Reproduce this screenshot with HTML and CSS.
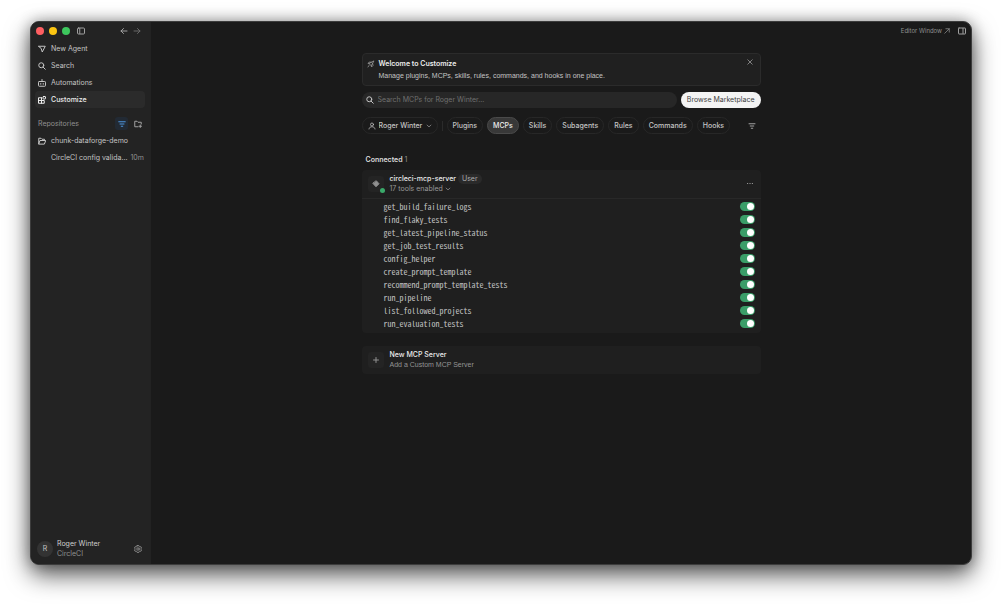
FILE: index.html
```html
<!DOCTYPE html>
<html lang="en">
<head>
    <meta charset="UTF-8">
    <meta name="viewport" content="width=device-width, initial-scale=1.0">
    <title>Customize</title>
    <link rel="stylesheet" href="styles.css">
</head>
<body>
    <div class="window">
        <aside class="sidebar">
            <div class="titlebar">
                <span class="dot red"></span>
                <span class="dot yellow"></span>
                <span class="dot green"></span>
                <button class="icon-btn panel-btn" aria-label="Toggle sidebar">
                    <svg class="icon" viewBox="0 0 16 16"><rect x="1" y="2" width="14" height="12" rx="2"/><path d="M5.500 3v10"/></svg>
                </button>
                <button class="icon-btn back-btn" aria-label="Back">
                    <svg class="icon" viewBox="0 0 16 16"><path d="M14 8H2M7 3L2 8l5 5"/></svg>
                </button>
                <button class="icon-btn faded" aria-label="Forward">
                    <svg class="icon" viewBox="0 0 16 16"><path d="M2 8h12M9 3l5 5-5 5"/></svg>
                </button>
            </div>

            <nav class="nav">
                <a class="nav-item" href="#">
                    <svg class="icon" viewBox="0 0 16 16"><path d="M1.500 2.500h13L8.500 14 6.500 7.500z"/></svg>
                    New Agent
                </a>
                <a class="nav-item" href="#">
                    <svg class="icon" viewBox="0 0 16 16"><circle cx="6.500" cy="6.500" r="5"/><path d="M10.300 10.300L14.500 14.500"/></svg>
                    Search
                </a>
                <a class="nav-item" href="#">
                    <svg class="icon" viewBox="0 0 16 16"><rect x="1" y="5" width="14" height="9.500" rx="1.500"/><path d="M8 1v4M5.500 9v1.500M10.500 9v1.500"/></svg>
                    Automations
                </a>
                <a class="nav-item active" href="#">
                    <svg class="icon" viewBox="0 0 16 16"><path d="M7 3.500H1v11h11.500V9H1M7 3.500v11"/><rect x="10" y="1" width="5" height="5" rx="1"/></svg>
                    Customize
                </a>
            </nav>

            <div class="repos-head">
                <span>Repositories</span>
                <button class="icon-btn filter-on" aria-label="Filter repositories">
                    <svg class="icon" viewBox="0 0 16 16"><path d="M1.500 3.500h13M4 8h8M6.500 12.500h3"/></svg>
                </button>
                <button class="icon-btn" aria-label="Add repository">
                    <svg class="icon" viewBox="0 0 16 16"><path d="M8 13.500H1.500v-11h4.500l2 2h6.500V8M12.500 10v5M10 12.500h5"/></svg>
                </button>
            </div>
            <a class="nav-item" href="#">
                <svg class="icon" viewBox="0 0 16 16"><path d="M1.500 13.500v-11h4.500l2 2h5V7M1.500 13.500L4 7h11.500L13 13.500z"/></svg>
                chunk-dataforge-demo
            </a>
            <a class="nav-item thread" href="#">
                <span class="thread-name">CircleCI config valida...</span>
                <span class="thread-age">10m</span>
            </a>

            <div class="account">
                <span class="avatar">R</span>
                <div class="account-text">
                    <div class="account-name">Roger Winter</div>
                    <div class="account-team">CircleCI</div>
                </div>
                <button class="icon-btn" aria-label="Settings">
                    <svg class="icon thin" viewBox="0 0 16 16"><path d="M6.500 1h3l.6 2 1.600.9 2-.5 1.500 2.600L13.800 7.500v1l1.400 1.500-1.500 2.600-2-.5-1.600.9-.6 2h-3l-.6-2-1.600-.9-2 .5L.8 10l1.400-1.500v-1L.8 6l1.500-2.600 2 .5L5.900 3z"/><circle cx="8" cy="8" r="2.500"/></svg>
                </button>
            </div>
        </aside>

        <main class="main">
            <header class="topbar">
                <a class="editor-link" href="#">
                    Editor Window
                    <svg class="icon small" viewBox="0 0 16 16"><path d="M2 14L14 2M5 2h9v9"/></svg>
                </a>
                <button class="icon-btn" aria-label="Toggle panel">
                    <svg class="icon" viewBox="0 0 16 16"><rect x="1" y="2" width="14" height="12" rx="1"/><path d="M10 3v10"/></svg>
                </button>
            </header>

            <div class="content">
                <section class="banner">
                    <svg class="icon thin" viewBox="0 0 16 16"><path d="M13.500 2.500L8.500 11.500 4.500 7.500zM4.500 7.500L2 7l2.500-3 4 .5M8.500 11.500l.5 2.500 3-3-.5-3.500M4 11l-2 3"/></svg>
                    <div class="banner-text">
                        <h1 class="title">Welcome to Customize</h1>
                        <p class="small-text">Manage plugins, MCPs, skills, rules, commands, and hooks in one place.</p>
                    </div>
                    <button class="icon-btn" aria-label="Close">
                        <svg class="icon small" viewBox="0 0 16 16"><path d="M2 2l12 12M14 2L2 14"/></svg>
                    </button>
                </section>

                <div class="search-row">
                    <label class="search">
                        <svg class="icon" viewBox="0 0 16 16"><circle cx="6.500" cy="6.500" r="5"/><path d="M10.300 10.300L14.500 14.500"/></svg>
                        <input type="text" aria-label="Search MCPs" placeholder="Search MCPs for Roger Winter...">
                    </label>
                    <button class="browse">Browse Marketplace</button>
                </div>

                <div class="filters">
                    <label class="pill owner">
                        <svg class="icon thin" viewBox="0 0 16 16"><circle cx="8" cy="5" r="3"/><path d="M2 14c.5-3 2.500-4.500 6-4.500s5.500 1.500 6 4.500"/></svg>
                        <select aria-label="Owner">
                            <option>Roger Winter</option>
                        </select>
                        <svg class="icon small thin" viewBox="0 0 16 16"><path d="M3 5.500l5 5 5-5"/></svg>
                    </label>
                    <span class="divider"></span>
                    <button class="pill">Plugins</button>
                    <button class="pill selected">MCPs</button>
                    <button class="pill">Skills</button>
                    <button class="pill">Subagents</button>
                    <button class="pill">Rules</button>
                    <button class="pill">Commands</button>
                    <button class="pill">Hooks</button>
                    <button class="icon-btn filter-btn" aria-label="Filter">
                        <svg class="icon" viewBox="0 0 16 16"><path d="M2 3.500h12M4.500 8h7M6.500 12.500h3"/></svg>
                    </button>
                </div>

                <h2 class="section-title">Connected <span class="count">1</span></h2>

                <section class="card">
                    <div class="card-head">
                        <span class="server-icon">
                            <svg class="icon" viewBox="0 0 16 16"><path d="M9 2l5 5.500L8 13.500 2 7z" fill="currentColor"/></svg>
                            <span class="status"></span>
                        </span>
                        <div class="server-text">
                            <div class="server-name">circleci-mcp-server <span class="tag">User</span></div>
                            <button class="tools-toggle" aria-expanded="true">
                                17 tools enabled
                                <svg class="icon small" viewBox="0 0 16 16"><path d="M3 5.500l5 5 5-5"/></svg>
                            </button>
                        </div>
                        <button class="icon-btn" aria-label="More">
                            <svg class="icon" viewBox="0 0 16 16"><path d="M3 7h.5M7.800 7h.5M12.500 7h.5"/></svg>
                        </button>
                    </div>
                    <div class="tools">
                        <label class="tool">get_build_failure_logs <input type="checkbox" class="switch" checked></label>
                        <label class="tool">find_flaky_tests <input type="checkbox" class="switch" checked></label>
                        <label class="tool">get_latest_pipeline_status <input type="checkbox" class="switch" checked></label>
                        <label class="tool">get_job_test_results <input type="checkbox" class="switch" checked></label>
                        <label class="tool">config_helper <input type="checkbox" class="switch" checked></label>
                        <label class="tool">create_prompt_template <input type="checkbox" class="switch" checked></label>
                        <label class="tool">recommend_prompt_template_tests <input type="checkbox" class="switch" checked></label>
                        <label class="tool">run_pipeline <input type="checkbox" class="switch" checked></label>
                        <label class="tool">list_followed_projects <input type="checkbox" class="switch" checked></label>
                        <label class="tool">run_evaluation_tests <input type="checkbox" class="switch" checked></label>
                    </div>
                </section>

                <button class="card new-server">
                    <span class="server-icon">
                        <svg class="icon" viewBox="0 0 16 16"><path d="M8 3v10M3 8h10"/></svg>
                    </span>
                    <span class="server-text">
                        <span class="server-name">New MCP Server</span>
                        <span class="small-text muted">Add a Custom MCP Server</span>
                    </span>
                </button>
            </div>
        </main>
    </div>
</body>
</html>
```

FILE: styles.css
```css
* {
    box-sizing: border-box;
}

body {
    display: flex;
    height: 100vh;
    margin: 0;
    padding: 21px 31px 40px 30px;
    background-color: #fff;
    color: #c4c4c4;
    font-family: Inter, "Liberation Sans", sans-serif;
    font-size: 7px;
    line-height: 10px;
}

h1, h2, p {
    margin: 0;
}

a {
    color: inherit;
    text-decoration: none;
}

button, input, select {
    margin: 0;
    padding: 0;
    border: none;
    background: none;
    color: inherit;
    font: inherit;
}

.window {
    display: flex;
    flex: 1;
    overflow: hidden;
    border: 1px solid #3c3c3c;
    border-radius: 9px;
    background-color: #1a1a1a;
    box-shadow: 0 10px 24px rgba(0,0,0,0.65), 0 0 14px rgba(0,0,0,0.3);
}

.icon {
    display: block;
    flex: none;
    width: 8px;
    height: 8px;
    fill: none;
    stroke: currentColor;
    stroke-width: 2;
    stroke-linejoin: round;
    stroke-linecap: round;
}

.icon.small {
    width: 6px;
    height: 6px;
}

.icon.thin {
    stroke-width: 1.5;
}

.icon-btn {
    display: flex;
    flex: none;
    align-items: center;
    justify-content: center;
    color: #a0a0a0;
}

.faded {
    color: #686868;
}

/* Sidebar */
.sidebar {
    display: flex;
    flex: none;
    flex-direction: column;
    width: 120px;
    padding: 0 5px 0 4px;
    border-right: 1px solid #222;
    background-color: #232323;
}

.titlebar {
    display: flex;
    align-items: center;
    gap: 5px;
    height: 17px;
    margin-bottom: 1px;
    padding: 0 4px 0 1px;
}

.dot {
    width: 8px;
    height: 8px;
    border-radius: 50%;
}

.red {
    background-color: #ff5f62;
}

.yellow {
    background-color: #fbc512;
}

.green {
    background-color: #3dc75d;
}

.panel-btn {
    margin-left: 2px;
}

.back-btn {
    margin-left: auto;
}

.nav {
    margin-bottom: 7px;
}

.nav-item {
    display: flex;
    align-items: center;
    gap: 5px;
    height: 17px;
    padding: 0 3px;
    border-radius: 4px;
}

.nav-item.active {
    background-color: #2b2b2b;
    color: #ececec;
    font-weight: 500;
}

.repos-head {
    display: flex;
    align-items: center;
    gap: 6px;
    height: 17px;
    padding: 0 3px;
    color: #909090;
}

.filter-on {
    width: 13px;
    height: 13px;
    margin-left: auto;
    border-radius: 3px;
    background-color: #222a34;
    color: #4c94dc;
}

.nav-item.thread {
    gap: 3px;
    padding: 0 2px 0 16px;
}

.thread-name {
    white-space: nowrap;
}

.thread-age {
    margin-left: auto;
    color: #929292;
}

.account {
    display: flex;
    align-items: center;
    gap: 4px;
    margin-top: auto;
    padding: 0 3px 5px 2px;
}

.avatar {
    width: 16px;
    height: 16px;
    border-radius: 50%;
    background-color: #333;
    line-height: 16px;
    text-align: center;
}

.account-text {
    flex: 1;
}

.account-name {
    color: #d0d0d0;
}

.account-team {
    color: #909090;
}

/* Main area */
.main {
    flex: 1;
    min-width: 0;
}

.topbar {
    display: flex;
    align-items: center;
    justify-content: flex-end;
    gap: 8px;
    height: 17px;
    padding-right: 5px;
}

.editor-link {
    display: flex;
    align-items: center;
    gap: 2px;
    color: #909090;
    font-size: 6px;
}

.content {
    max-width: 399px;
    margin: 14px auto 0;
}

.banner {
    display: flex;
    gap: 4px;
    padding: 5px 7px 4px 4px;
    border: 1px solid #2b2b2b;
    border-radius: 4px;
    background-color: #202020;
}

.banner .icon {
    color: #a0a0a0;
}

.banner > .icon {
    margin-top: 1px;
}

.banner .icon-btn {
    align-self: flex-start;
}

.banner-text {
    flex: 1;
}

.title {
    color: #ececec;
    font-size: 7px;
    font-weight: 600;
}

.small-text {
    font-family: "Liberation Sans", Arial, sans-serif;
    font-size: 7px;
}

.banner .small-text {
    margin-top: 2px;
}

.muted {
    color: #949494;
}

.search-row {
    display: flex;
    gap: 4px;
    margin-top: 6px;
}

.search {
    display: flex;
    flex: 1;
    align-items: center;
    gap: 4px;
    height: 16px;
    padding: 0 4px;
    border-radius: 8px;
    background-color: #272727;
}

.search input {
    flex: 1;
    outline: none;
}

.search input::placeholder {
    color: #707070;
}

.browse {
    height: 16px;
    padding: 0 6px;
    border-radius: 8px;
    background-color: #f4f4f4;
    color: #404040;
}

.filters {
    display: flex;
    align-items: center;
    gap: 4px;
    margin-top: 9px;
}

.pill {
    height: 17px;
    padding: 0 5px;
    border: 1px solid #272727;
    border-radius: 9px;
    color: #c4c4c4;
    font-weight: 500;
}

.pill.selected {
    border-color: #4a4a4a;
    background-color: #383838;
    color: #ececec;
}

.owner {
    display: flex;
    align-items: center;
    gap: 3px;
}

.owner select {
    appearance: none;
    outline: none;
}

.divider {
    width: 1px;
    height: 10px;
    background-color: #2b2b2b;
}

.filter-btn {
    margin-left: auto;
    margin-right: 5px;
}

.section-title {
    margin: 21px 0 5px 4px;
    color: #dcdcdc;
    font-size: 7px;
    font-weight: 600;
}

.count {
    color: #909090;
    font-weight: 400;
}

.card {
    width: 100%;
    border-radius: 4px;
    background-color: #1f1f1f;
}

.card-head, .new-server {
    display: flex;
    align-items: center;
    gap: 6px;
    height: 28px;
    padding: 0 7px 0 6px;
}

.server-icon {
    display: flex;
    position: relative;
    flex: none;
    align-items: center;
    justify-content: center;
    width: 16px;
    height: 16px;
    border-radius: 3px;
    background-color: #242424;
    color: #909090;
}

.status {
    position: absolute;
    right: -1px;
    bottom: -1px;
    width: 5px;
    height: 5px;
    border-radius: 50%;
    background-color: #3aa96a;
}

.server-text {
    display: flex;
    flex: 1;
    flex-direction: column;
    align-items: flex-start;
}

.server-name {
    color: #ececec;
    font-weight: 500;
}

.tag {
    display: inline-block;
    padding: 0 4px;
    border-radius: 5px;
    background-color: #2a2a2a;
    color: #acacac;
    font-weight: 400;
}

.tools-toggle {
    display: flex;
    align-items: center;
    gap: 2px;
    color: #989898;
}

.tools {
    padding: 1px 6px 3px 22px;
    border-top: 1px solid #282828;
}

.tool {
    display: flex;
    align-items: center;
    justify-content: space-between;
    height: 13px;
    font-family: "Noto Sans Mono CJK SC", "DejaVu Sans Mono", monospace;
    font-size: 8px;
}

.switch {
    appearance: none;
    display: flex;
    align-items: center;
    justify-content: flex-end;
    width: 15px;
    height: 9px;
    padding: 1px;
    border-radius: 5px;
    background-color: #3a9d68;
}

.switch::before {
    content: "";
    width: 7px;
    height: 7px;
    border-radius: 50%;
    background-color: #fff;
}

.new-server {
    margin-top: 13px;
    text-align: left;
}
```
